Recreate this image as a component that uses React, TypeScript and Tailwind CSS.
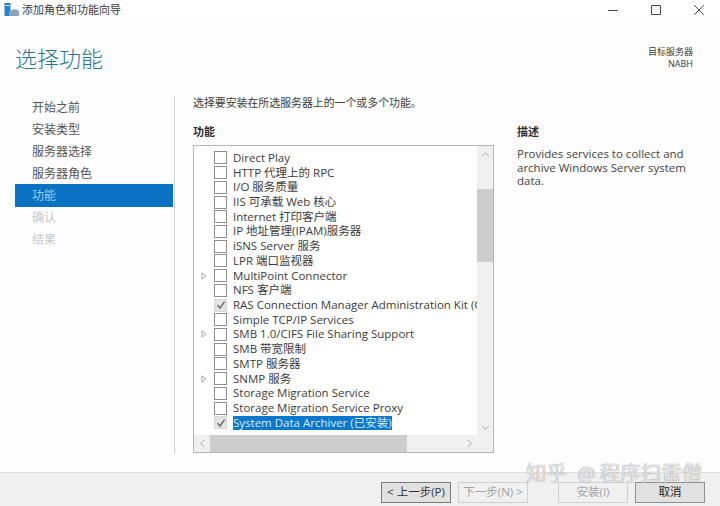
import React from 'react';

const uiFont = "font-['Open_Sans','Noto_Sans_CJK_SC',sans-serif]";

const navItems = [
  { label: '开始之前' },
  { label: '安装类型' },
  { label: '服务器选择' },
  { label: '服务器角色' },
  { label: '功能', active: true },
  { label: '确认', disabled: true },
  { label: '结果', disabled: true },
];

const features = [
  { label: 'Direct Play' },
  { label: 'HTTP 代理上的 RPC' },
  { label: 'I/O 服务质量' },
  { label: 'IIS 可承载 Web 核心' },
  { label: 'Internet 打印客户端' },
  { label: 'IP 地址管理(IPAM)服务器' },
  { label: 'iSNS Server 服务' },
  { label: 'LPR 端口监视器' },
  { label: 'MultiPoint Connector', expandable: true },
  { label: 'NFS 客户端' },
  { label: 'RAS Connection Manager Administration Kit (CMAK)', checked: true },
  { label: 'Simple TCP/IP Services' },
  { label: 'SMB 1.0/CIFS File Sharing Support', expandable: true },
  { label: 'SMB 带宽限制' },
  { label: 'SMTP 服务器' },
  { label: 'SNMP 服务', expandable: true },
  { label: 'Storage Migration Service' },
  { label: 'Storage Migration Service Proxy' },
  { label: 'System Data Archiver (已安装)', checked: true, selected: true },
];

const Chevron = ({ d }: { d: string }) => (
  <svg width="9" height="9" viewBox="0 0 9 9" fill="none" stroke="#a6a6a6" strokeWidth="1">
    <path d={d} />
  </svg>
);

const FeatureRow = ({ item }: { item: (typeof features)[number] }) => (
  <div className="flex h-[14.72px] items-center">
    <div className="flex w-[20px] shrink-0 justify-center">
      {item.expandable && (
        <svg width="6" height="8" viewBox="0 0 6 8" fill="none" stroke="#a8a8a8">
          <path d="M1 .8 5 4 1 7.2Z" />
        </svg>
      )}
    </div>
    <div
      className={`flex h-[13px] w-[13px] shrink-0 items-center justify-center border border-[#8e8e8e] ${
        item.checked ? 'border-[#d6d6d6] bg-[#e4e4e4]' : 'bg-white'
      }`}
    >
      {item.checked && (
        <svg width="10" height="10" viewBox="0 0 10 10" fill="none" stroke="#6a6a6a" strokeWidth="1.5">
          <path d="M1.5 5.2 4 8 8.6 1.6" />
        </svg>
      )}
    </div>
    <span
      className={`ml-[6px] whitespace-nowrap text-[11.5px] leading-[14px] ${
        item.selected ? 'bg-[#0a78cc] text-[#d8ebf8]' : 'text-[#3c3c3c]'
      }`}
    >
      {item.label}
    </span>
  </div>
);

const FooterButton = ({
  children,
  disabled,
  focused,
  className = '',
}: {
  children: React.ReactNode;
  disabled?: boolean;
  focused?: boolean;
  className?: string;
}) => (
  <button
    className={`h-[21px] w-[70px] border text-[11.5px] ${
      disabled
        ? 'border-[#cfcfcf] bg-[#f0f0f0] text-[#a2a2a2]'
        : focused
          ? 'border-[#7a7a7a] bg-[#e1e1e1] text-[#333]'
          : 'border-[#8f8f8f] bg-[#e1e1e1] text-[#222]'
    } ${className}`}
  >
    {children}
  </button>
);

export default function App() {
  return (
    <div className={`relative flex h-[506px] w-[720px] flex-col overflow-hidden bg-[#fdfdfd] ${uiFont}`}>
      {/* title bar */}
      <div className="flex h-[19px] shrink-0 items-center bg-white pl-[4px]">
        <svg width="15" height="13" viewBox="0 0 15 13">
          <rect x="0.5" y="0" width="6" height="13" fill="#1f86d0" />
          <rect x="1.500" y="2" width="4" height="1" fill="#d5ecfa" />
          <path d="M5 13V9.500Q5 7.500 7.500 7.500Q9 5 11.500 6.500Q15 6.500 15 9.500V13Z" fill="#8ea3b3" />
        </svg>
        <span className="ml-[3px] translate-y-px text-[11px] text-[#3a3a3a]">添加角色和功能向导</span>
        <div className="ml-auto flex items-center">
          <svg width="10" height="10" viewBox="0 0 10 10" stroke="#444" className="mr-[33px]">
            <path d="M0 5.5h10" />
          </svg>
          <svg width="10" height="10" viewBox="0 0 10 10" stroke="#444" fill="none" className="mr-[33px]">
            <path d="M.5.5h9v9h-9z" />
          </svg>
          <svg width="10" height="10" viewBox="0 0 10 10" stroke="#444" fill="none" className="mr-[16px]">
            <path d="M.2.2l9.6 9.6M9.800.2.2 9.800" />
          </svg>
        </div>
      </div>

      {/* heading */}
      <div className="flex h-[77px] shrink-0 items-start justify-between pl-[15px] pr-[27px]">
        <h1 className="mt-[24px] text-[22px] font-light leading-[30px] text-[#2a7696]">选择功能</h1>
        <div className="mt-[27px] text-right text-[9px] leading-[11.500px] text-[#3a3a3a]">
          <div>目标服务器</div>
          <div>NABH</div>
        </div>
      </div>

      {/* body */}
      <div className="flex h-[358px] shrink-0">
        <nav className="ml-[15px] w-[158px] shrink-0">
          {navItems.map(item => (
            <div
              key={item.label}
              className={`flex h-[22px] items-center pl-[17px] text-[12px] ${
                item.active
                  ? 'h-[23px] bg-[#0a72c2] text-[#9cc8ea]'
                  : item.disabled
                    ? 'text-[#c9c9c9]'
                    : 'pt-[2px] text-[#555]'
              }`}
            >
              {item.label}
            </div>
          ))}
        </nav>
        <div className="ml-[1px] w-px self-stretch bg-[#d4d4d4]" />

        <div className="ml-[18px] flex-1">
          <p className="h-[14px] text-[10.900px] leading-[14px] text-[#3c3c3c]">
            选择要安装在所选服务器上的一个或多个功能。
          </p>
          <div className="mt-[15px] flex">
            <div className="w-[301px] shrink-0">
              <h2 className="h-[16px] text-[11px] font-bold leading-[14px] text-[#2f2f2f]">功能</h2>
              <div className="mt-[4px] flex h-[308px] flex-col border border-[#b5b5b5] bg-white">
                <div className="flex min-h-0 flex-1">
                  <div className="min-w-0 flex-1 overflow-hidden pt-[4.500px]">
                    {features.map(item => (
                      <FeatureRow key={item.label} item={item} />
                    ))}
                  </div>
                  <div className="flex w-[16px] shrink-0 flex-col bg-[#f0f0f0]">
                    <div className="flex h-[16px] items-center justify-center">
                      <Chevron d="M1 6.300 4.500 2.800 8 6.300" />
                    </div>
                    <div className="mt-[27px] h-[73px] bg-[#cdcdcd]" />
                    <div className="mt-auto flex h-[16px] items-center justify-center">
                      <Chevron d="M1 2.800 4.500 6.300 8 2.800" />
                    </div>
                  </div>
                </div>
                <div className="flex h-[17px] shrink-0 bg-[#f0f0f0]">
                  <div className="flex w-[16px] items-center justify-center">
                    <Chevron d="M6.300 1 2.800 4.500 6.300 8" />
                  </div>
                  <div className="h-full w-[197px] bg-[#cdcdcd]" />
                  <div className="ml-auto mr-[16px] flex w-[16px] items-center justify-center">
                    <Chevron d="M2.800 1 6.300 4.500 2.800 8" />
                  </div>
                </div>
              </div>
            </div>

            <div className="ml-[23px] w-[180px]">
              <h2 className="h-[16px] text-[11px] font-bold leading-[14px] text-[#2f2f2f]">描述</h2>
              <p className="mt-[6px] text-[11.500px] leading-[13.500px] text-[#444]">
                Provides services to collect and archive Windows Server system data.
              </p>
            </div>
          </div>
        </div>
      </div>

      {/* footer */}
      <div className="mt-auto flex h-[34px] shrink-0 items-center border-t border-[#dfdfdf] bg-[#f0f0f0] pl-[381px] pt-[5px]">
        <FooterButton focused>&lt; 上一步(P)</FooterButton>
        <FooterButton disabled className="ml-[7px]">下一步(N) &gt;</FooterButton>
        <FooterButton disabled className="ml-[30px]">安装(I)</FooterButton>
        <FooterButton className="ml-[7px]">取消</FooterButton>
      </div>

      {/* watermark over the footer */}
      <div className="absolute left-[526px] top-[460px] whitespace-nowrap text-[20.500px] leading-[26px] text-white/80 [word-spacing:5px] [text-shadow:0_0_1px_#666]">
        知乎 <span className="mr-[4px]">@</span>程序扫雷僧
      </div>
    </div>
  );
}
